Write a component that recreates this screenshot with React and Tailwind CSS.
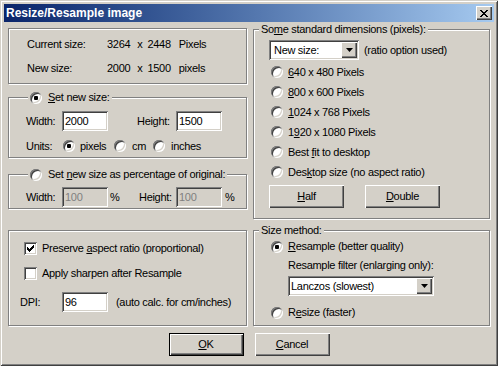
const sunken =
  "shadow-[inset_1px_1px_#808080,inset_-1px_-1px_#ffffff,inset_2px_2px_#404040,inset_-2px_-2px_#d4d0c8]";
const raised =
  "shadow-[inset_1px_1px_#ffffff,inset_-1px_-1px_#404040,inset_-2px_-2px_#808080]";

const checkPixels = [
  [6, 0], [5, 1], [6, 1], [0, 2], [4, 2], [5, 2], [6, 2],
  [0, 3], [1, 3], [3, 3], [4, 3], [5, 3],
  [0, 4], [1, 4], [2, 4], [3, 4], [4, 4],
  [1, 5], [2, 5], [3, 5], [2, 6],
];

function Radio({ checked }) {
  return (
    <span className={`flex h-[12px] w-[12px] shrink-0 items-center justify-center rounded-full bg-white ${sunken}`}>
      {checked && <span className="h-[4px] w-[4px] rounded-[1px] bg-black" />}
    </span>
  );
}

function Check({ checked }) {
  return (
    <span className={`flex h-[13px] w-[13px] shrink-0 items-center justify-center bg-white ${sunken}`}>
      {checked && (
        <svg width="7" height="7" viewBox="0 0 7 7" shapeRendering="crispEdges">
          {checkPixels.map(([x, y]) => (
            <rect key={`${x}-${y}`} x={x} y={y} width="1" height="1" fill="#000" />
          ))}
        </svg>
      )}
    </span>
  );
}

function Edit({ value, disabled }) {
  return (
    <div
      className={`flex h-[20px] w-[46px] shrink-0 items-center pl-[3px] ${sunken} ${
        disabled ? "bg-[#d4d0c8] text-[#808080]" : "bg-white"
      }`}
    >
      {value}
    </div>
  );
}

function Combo({ value, className }) {
  return (
    <div className={`flex h-[20px] shrink-0 items-center bg-white ${sunken} ${className}`}>
      <span className="flex-1">{value}</span>
      <span className={`mr-[2px] flex h-[16px] w-[16px] items-center justify-center bg-[#d4d0c8] ${raised}`}>
        <svg width="7" height="4" viewBox="0 0 7 4">
          <path d="M0 0h7L3.5 4z" fill="#000" />
        </svg>
      </span>
    </div>
  );
}

function Button({ children, isDefault }) {
  if (isDefault) {
    return (
      <div className="flex h-[23px] w-[75px] border border-black">
        <div className={`flex flex-1 items-center justify-center bg-[#d4d0c8] ${raised}`}>{children}</div>
      </div>
    );
  }
  return (
    <div className={`flex h-[23px] w-[75px] items-center justify-center bg-[#d4d0c8] ${raised}`}>{children}</div>
  );
}

function Group({ legend, legendClass, className, children }) {
  return (
    <div className={`relative border border-[#808080] shadow-[inset_1px_1px_#ffffff,1px_1px_#ffffff] ${className}`}>
      {legend && (
        <div className={`absolute -top-[7px] flex h-[13px] items-center bg-[#d4d0c8] px-[2px] ${legendClass}`}>
          {legend}
        </div>
      )}
      {children}
    </div>
  );
}

function RadioRow({ checked, children, className = "" }) {
  return (
    <div className={`flex items-center gap-[5px] ${className}`}>
      <Radio checked={checked} />
      <span>{children}</span>
    </div>
  );
}

export default function App() {
  return (
    <div className="h-[366px] w-[498px] bg-[#d4d0c8] p-[4px] font-['Liberation_Sans',Arial,sans-serif] text-[11px] leading-[13px] tracking-[-0.3px] text-black shadow-[inset_1px_1px_#d4d0c8,inset_-1px_-1px_#404040,inset_2px_2px_#ffffff,inset_-2px_-2px_#808080]">
      {/* title bar */}
      <div className="flex h-[18px] items-center bg-gradient-to-r from-[#0a246a] to-[#a6caf0] pl-[2px] pr-[2px]">
        <span className="flex-1 text-[12px] font-bold tracking-normal text-white">Resize/Resample image</span>
        <div className={`flex h-[14px] w-[16px] items-center justify-center bg-[#d4d0c8] ${raised}`}>
          <svg width="8" height="7" viewBox="0 0 8 7" shapeRendering="crispEdges">
            <path d="M0 0h2v1h-2zM6 0h2v1h-2zM1 1h2v1h-2zM5 1h2v1h-2zM2 2h4v1h-4zM3 3h2v1h-2zM2 4h4v1h-4zM1 5h2v1h-2zM5 5h2v1h-2zM0 6h2v1h-2zM6 6h2v1h-2z" fill="#000" />
          </svg>
        </div>
      </div>

      <div className="flex gap-[6px] px-[4px]">
        {/* left column */}
        <div className="flex w-[239px] flex-col">
          <Group className="mt-[6px] h-[56px]">
            <div className="flex flex-col gap-[11px] pl-[18px] pt-[9px]">
              <div className="flex">
                <span className="w-[80px]">Current size:</span>
                <span>3264</span>
                <span className="ml-[7px]">x</span>
                <span className="ml-[5px]">2448</span>
                <span className="ml-[8px]">Pixels</span>
              </div>
              <div className="flex">
                <span className="w-[80px]">New size:</span>
                <span>2000</span>
                <span className="ml-[7px]">x</span>
                <span className="ml-[5px]">1500</span>
                <span className="ml-[8px]">pixels</span>
              </div>
            </div>
          </Group>

          <Group
            className="mt-[13px] h-[61px]"
            legendClass="left-[19px]"
            legend={
              <RadioRow checked className="gap-[6px]">
                <u>S</u>et new size:
              </RadioRow>
            }
          >
            <div className="flex items-center pl-[17px] pt-[13px]">
              <span className="w-[36px]">Width:</span>
              <Edit value="2000" />
              <span className="ml-[29px] w-[39px]">Height:</span>
              <Edit value="1500" />
            </div>
            <div className="mt-[5px] flex h-[20px] items-center pl-[17px]">
              <span className="w-[37px]">Units:</span>
              <RadioRow checked className="w-[51px]">pixels</RadioRow>
              <RadioRow className="w-[39px] gap-[6px]">cm</RadioRow>
              <RadioRow className="gap-[6px]">inches</RadioRow>
            </div>
          </Group>

          <Group
            className="mt-[16px] h-[35px]"
            legendClass="left-[19px]"
            legend={
              <RadioRow className="gap-[6px]">
                Set <u>n</u>ew size as percentage of original:
              </RadioRow>
            }
          >
            <div className="flex items-center pl-[17px] pt-[12px]">
              <span className="w-[36px]">Width:</span>
              <Edit value="100" disabled />
              <span className="ml-[2px] w-[29px]">%</span>
              <span className="w-[37px]">Height:</span>
              <Edit value="100" disabled />
              <span className="ml-[3px]">%</span>
            </div>
          </Group>

          <Group className="mt-[21px] h-[96px]">
            <div className="flex items-center gap-[5px] pl-[15px] pt-[11px]">
              <Check checked />
              <span>
                Preserve <u>a</u>spect ratio (proportional)
              </span>
            </div>
            <div className="mt-[12px] flex items-center gap-[5px] pl-[15px]">
              <Check />
              <span>Apply sharpen after Resample</span>
            </div>
            <div className="mt-[12px] flex items-center pl-[11px]">
              <span className="w-[42px]">DPI:</span>
              <Edit value="96" />
              <span className="ml-[8px]">(auto calc. for cm/inches)</span>
            </div>
          </Group>
        </div>

        {/* right column */}
        <div className="flex w-[237px] flex-col">
          <Group
            className="mt-[7px] h-[190px]"
            legendClass="left-[5px]"
            legend={
              <span>
                So<u>m</u>e standard dimensions (pixels):
              </span>
            }
          >
            <div className="flex items-center pl-[15px] pt-[10px]">
              <Combo value={<span className="pl-[5px]">New size:</span>} className="w-[90px]" />
              <span className="ml-[5px]">(ratio option used)</span>
            </div>
            <div className="mt-[2px] flex flex-col pl-[17px]">
              <RadioRow className="h-[20px]">
                <u>6</u>40 x 480 Pixels
              </RadioRow>
              <RadioRow className="h-[20px]">
                <u>8</u>00 x 600 Pixels
              </RadioRow>
              <RadioRow className="h-[20px]">
                <u>1</u>024 x 768 Pixels
              </RadioRow>
              <RadioRow className="h-[20px]">
                1<u>9</u>20 x 1080 Pixels
              </RadioRow>
              <RadioRow className="h-[20px]">
                Best <u>f</u>it to desktop
              </RadioRow>
              <RadioRow className="h-[20px]">
                Des<u>k</u>top size (no aspect ratio)
              </RadioRow>
            </div>
            <div className="mt-[3px] flex gap-[21px] pl-[15px]">
              <Button>
                <u>H</u>alf
              </Button>
              <Button>
                <u>D</u>ouble
              </Button>
            </div>
          </Group>

          <Group className="mt-[11px] h-[96px]" legendClass="left-[5px]" legend={<span>Size method:</span>}>
            <RadioRow checked className="pl-[17px] pt-[9px]">
              <u>R</u>esample (better quality)
            </RadioRow>
            <div className="mt-[6px] pl-[34px]">Resample filter (enlarging only):</div>
            <div className="mt-[4px] pl-[34px]">
              <Combo value={<span className="pl-[3px]">Lanczos (slowest)</span>} className="w-[146px]" />
            </div>
            <RadioRow className="mt-[10px] pl-[17px]">
              R<u>e</u>size (faster)
            </RadioRow>
          </Group>
        </div>
      </div>

      <div className="mt-[7px] flex justify-center gap-[11px]">
        <Button isDefault>
          <u>O</u>K
        </Button>
        <Button>
          <u>C</u>ancel
        </Button>
      </div>
    </div>
  );
}
